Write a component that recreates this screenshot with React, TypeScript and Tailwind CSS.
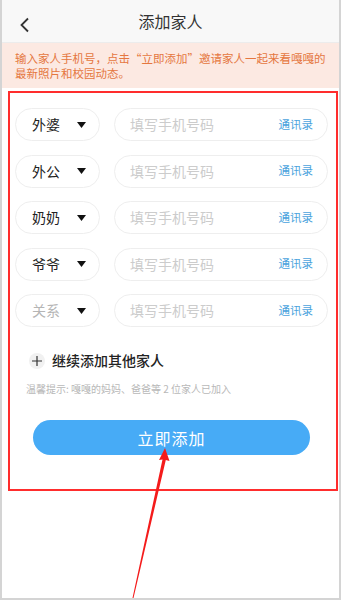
import React from 'react';

const font = { fontFamily: '"Noto Sans CJK SC", "Noto Sans", sans-serif' };

const relations = [
  { label: '外婆', chosen: true },
  { label: '外公', chosen: true },
  { label: '奶奶', chosen: true },
  { label: '爷爷', chosen: true },
  { label: '关系', chosen: false },
];

function Caret() {
  return (
    <svg width="9" height="6" viewBox="0 0 9 6">
      <path d="M0 0 H9 L4.5 6 Z" fill="#111" />
    </svg>
  );
}

function FamilyRow({ label, chosen }: { label: string; chosen: boolean }) {
  return (
    <div className="flex items-center h-[33px]">
      <div className="flex items-center w-[85px] h-full rounded-full border border-[#eeeeee] pl-[16px] pr-[13px] justify-between">
        <span className={chosen ? 'text-[14px] text-[#222]' : 'text-[14px] text-[#b5b5b5]'}>{label}</span>
        <Caret />
      </div>
      <div className="flex items-center ml-[14px] w-[214px] h-full rounded-full border border-[#eeeeee] pl-[15px] pr-[14px] justify-between">
        <span className="text-[14px] text-[#cccccc]">填写手机号码</span>
        <span className="text-[11.5px] text-[#4ba3dd]">通讯录</span>
      </div>
    </div>
  );
}

export default function App() {
  return (
    <div
      className="relative w-[341px] h-[600px] bg-white border-l-2 border-r-2 border-b-2 border-[#d4d4d4] overflow-hidden"
      style={font}
    >
      {/* header */}
      <div className="relative flex items-center justify-center h-[43px] bg-[#f8f8f8] border-b border-[#ececec]">
        <svg className="absolute left-[17px] top-[17px]" width="12" height="16" viewBox="0 0 12 16">
          <path d="M9 1.5 L2.5 8 L9 14.5" fill="none" stroke="#333" strokeWidth="1.8" />
        </svg>
        <span className="text-[16px] text-[#333]">添加家人</span>
      </div>

      {/* notice */}
      <div className="h-[45px] bg-[#fce9e2] pl-[13px] pt-[8px] text-[11.5px] text-[#e5773f]">
        <div className="leading-[14.5px]">输入家人手机号，点击“立即添加”邀请家人一起来看嘎嘎的</div>
        <div className="leading-[14.5px]">最新照片和校园动态。</div>
      </div>

      {/* highlighted form */}
      <div className="mt-[3px] ml-[6px] w-[330px] h-[400px] border-2 border-[#ff2d2d] pl-[5px] pt-[15px]">
        <div className="flex flex-col gap-[13.5px]">
          {relations.map((r) => (
            <FamilyRow key={r.label} label={r.label} chosen={r.chosen} />
          ))}
        </div>

        <div className="flex items-center mt-[23px] ml-[14px]">
          <div className="flex items-center justify-center w-[16px] h-[16px] rounded-full bg-[#f1f1f1]">
            <svg width="10" height="10" viewBox="0 0 10 10">
              <path d="M5 0 V10 M0 5 H10" stroke="#333" strokeWidth="1.2" />
            </svg>
          </div>
          <span className="ml-[7px] text-[14px] font-medium text-[#222]">继续添加其他家人</span>
        </div>

        <div className="mt-[10px] ml-[11px] text-[10px] text-[#b8b8b8]">
          温馨提示: 嘎嘎的妈妈、爸爸等 2 位家人已加入
        </div>

        <div className="flex items-center justify-center mt-[24px] ml-[18px] w-[277px] h-[35px] rounded-full bg-[#47abf6]">
          <span className="text-[16px] text-white tracking-[1px]">立即添加</span>
        </div>
      </div>

      {/* annotation arrow */}
      <svg className="absolute left-0 top-0 pointer-events-none" width="341" height="600" viewBox="0 0 341 600">
        <path d="M163 448 L167.5 461 L163.8 460 L131.5 598 L130.5 598 L160.5 459.5 L157 460 Z" fill="#f41b1b" />
      </svg>
    </div>
  );
}
